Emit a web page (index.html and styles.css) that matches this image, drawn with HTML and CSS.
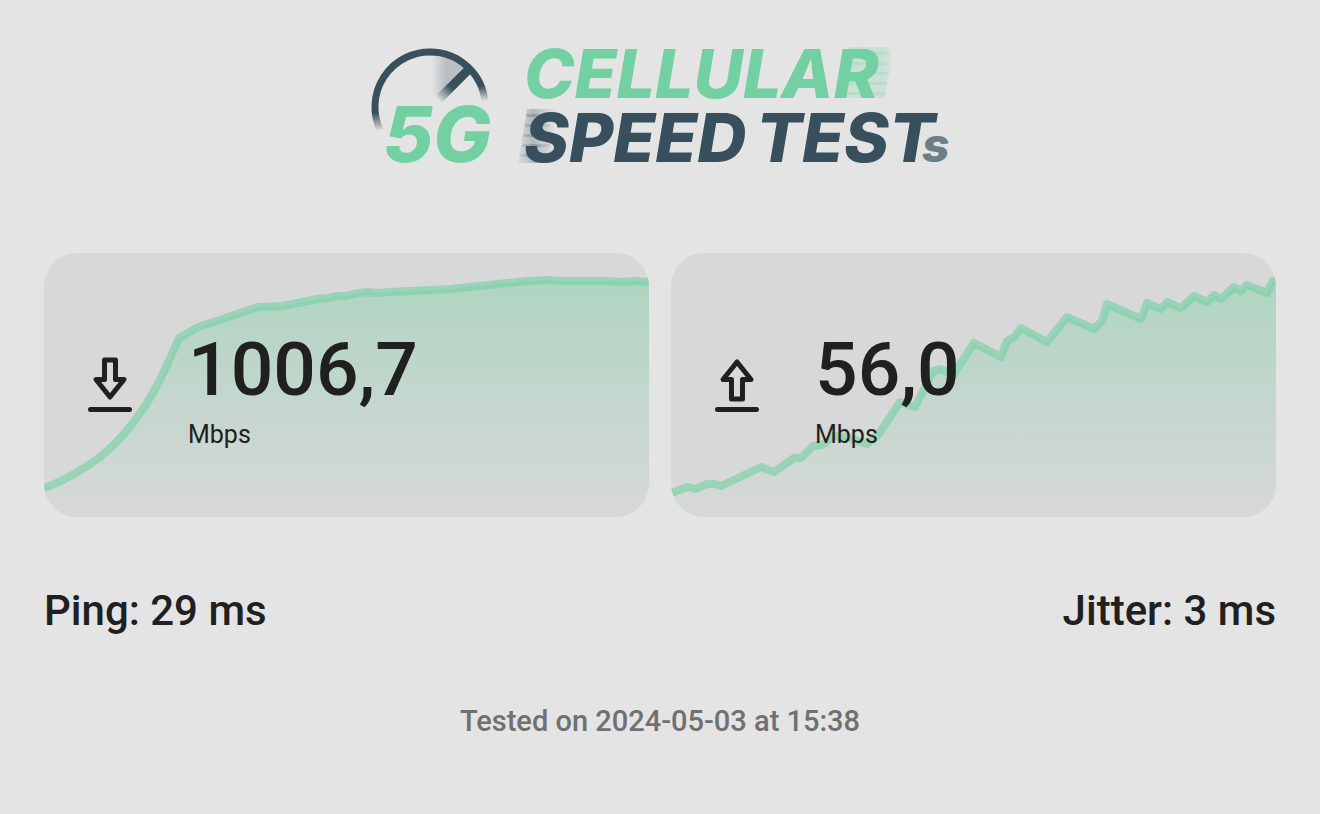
FILE: index.html
```html
<!DOCTYPE html>
<html lang="en">
<head>
    <meta charset="UTF-8">
    <meta name="viewport" content="width=device-width, initial-scale=1.0">
    <title>5G Cellular Speed Tests</title>
    <link rel="stylesheet" href="styles.css">
</head>
<body>
    <header class="header">
        <svg class="logo" viewBox="0 0 600 140" role="img" aria-label="5G Cellular Speed Tests">
            <defs>
                <linearGradient id="arcLeft" gradientUnits="userSpaceOnUse" x1="0" y1="78" x2="0" y2="96">
                    <stop offset="0" stop-color="#38505e"/>
                    <stop offset="1" stop-color="#38505e" stop-opacity="0"/>
                </linearGradient>
                <linearGradient id="arcRight" gradientUnits="userSpaceOnUse" x1="0" y1="51" x2="0" y2="66">
                    <stop offset="0" stop-color="#38505e"/>
                    <stop offset="1" stop-color="#38505e" stop-opacity="0"/>
                </linearGradient>
                <linearGradient id="needle" gradientUnits="userSpaceOnUse" x1="91" y1="52" x2="78" y2="65">
                    <stop offset="0" stop-color="#38505e"/>
                    <stop offset="1" stop-color="#38505e" stop-opacity="0"/>
                </linearGradient>
                <linearGradient id="sweep" gradientUnits="userSpaceOnUse" x1="71" y1="0" x2="86" y2="0">
                    <stop offset="0" stop-color="#38505e" stop-opacity="0"/>
                    <stop offset="1" stop-color="#38505e" stop-opacity="0.25"/>
                </linearGradient>
                <linearGradient id="trailGreen" gradientUnits="userSpaceOnUse" x1="505" y1="0" x2="534" y2="0">
                    <stop offset="0" stop-color="#72d0a2" stop-opacity="0.22"/>
                    <stop offset="0.7" stop-color="#72d0a2" stop-opacity="0.2"/>
                    <stop offset="1" stop-color="#72d0a2" stop-opacity="0.04"/>
                </linearGradient>
                <linearGradient id="trailBlue" gradientUnits="userSpaceOnUse" x1="158" y1="0" x2="196" y2="0">
                    <stop offset="0" stop-color="#38505e" stop-opacity="0.05"/>
                    <stop offset="0.4" stop-color="#38505e" stop-opacity="0.3"/>
                    <stop offset="1" stop-color="#38505e" stop-opacity="0"/>
                </linearGradient>
            </defs>
            <path fill="url(#sweep)" d="M70 20Q91 21 104 32L77 60L70 62Z"/>
            <path class="arc" stroke="url(#arcLeft)" d="M20 95A55 55 0 0 1 71 17"/>
            <path class="arc" stroke="url(#arcRight)" d="M70 17A55 55 0 0 1 125 68"/>
            <path class="needle" stroke="url(#needle)" d="M109 34L77 66"/>
            <path fill="url(#trailGreen)" d="M489 12H533L525 63H483Z"/>
            <path fill="url(#trailGreen)" d="M488 17H531V20H488ZM487 27H530V30H487ZM486 37H529V40H486ZM485 47H527V50H485ZM484 57H525V60H484Z"/>
            <path fill="url(#trailBlue)" d="M167 74H196L190 128H158Z"/>
            <path fill="url(#trailBlue)" d="M166 79H192V82H166ZM165 89H190V92H165ZM163 99H190V102H163ZM162 109H190V112H162ZM160 119H190V122H160Z"/>
            <text class="logo-badge" x="23" y="127">5G</text>
            <text class="logo-green" x="164" y="63">CELLULAR</text>
            <text class="logo-blue" x="164" y="127">SPEED</text>
            <text class="logo-blue" x="396" y="127">TEST</text>
            <text class="logo-small" x="562" y="127">s</text>
        </svg>
    </header>

    <main>
        <div class="results">
            <section class="card" aria-label="Download">
                <svg class="chart" viewBox="0 0 605 264" preserveAspectRatio="none" aria-hidden="true">
                    <defs>
                        <linearGradient id="fill" x1="0" y1="0" x2="0" y2="1">
                            <stop offset="0" stop-color="#72d0a2" stop-opacity="0.4"/>
                            <stop offset="1" stop-color="#72d0a2" stop-opacity="0"/>
                        </linearGradient>
                    </defs>
                    <path fill="url(#fill)" d="M0 235L3 234Q29 224 56 204Q96 172 123 112L135 85L154 74L176 67L193 61L214 54L239 53L263 48L273 46L284 45L293 43L303 43L313 40L324 39L333 40L346 39L406 36L483 28L504 27L518 28L563 28L578 29L591 28L605 29V264H0Z"/>
                    <path class="line" d="M0 235L3 234Q29 224 56 204Q96 172 123 112L135 85L154 74L176 67L193 61L214 54L239 53L263 48L273 46L284 45L293 43L303 43L313 40L324 39L333 40L346 39L406 36L483 28L504 27L518 28L563 28L578 29L591 28L605 29"/>
                </svg>
                <svg class="icon" viewBox="0 0 44 56" aria-hidden="true">
                    <path d="M16.500 3H27.500V22.500H36L22 40L8 22.500H16.500ZM2.500 52.500H41.500"/>
                </svg>
                <div class="reading">
                    <div class="value">1006,7</div>
                    <div class="unit">Mbps</div>
                </div>
            </section>

            <section class="card" aria-label="Upload">
                <svg class="chart" viewBox="0 0 605 264" preserveAspectRatio="none" aria-hidden="true">
                    <path fill="url(#fill)" d="M0 239L3 239L17 234L24 236L36 231L44 231L50 233L69 224L90 214L103 219L123 205L130 205L142 193L151 192L163 183L176 184L196 191L207 182L229 149L244 154L262 118L270 116L282 122L303 90L330 104L336 88L343 84L350 75L376 89L396 64L423 76L431 68L436 51L470 66L476 50L490 56L496 49L510 55L523 43L536 49L543 42L550 46L563 34L570 38L576 32L596 40L602 28L605 28V264H0Z"/>
                    <path class="line" d="M0 239L3 239L17 234L24 236L36 231L44 231L50 233L69 224L90 214L103 219L123 205L130 205L142 193L151 192L163 183L176 184L196 191L207 182L229 149L244 154L262 118L270 116L282 122L303 90L330 104L336 88L343 84L350 75L376 89L396 64L423 76L431 68L436 51L470 66L476 50L490 56L496 49L510 55L523 43L536 49L543 42L550 46L563 34L570 38L576 32L596 40L602 28"/>
                </svg>
                <svg class="icon" viewBox="0 0 44 56" aria-hidden="true">
                    <path d="M16.500 42H27.500V22.500H36L22 5L8 22.500H16.500ZM2.500 52.500H41.500"/>
                </svg>
                <div class="reading">
                    <div class="value">56,0</div>
                    <div class="unit">Mbps</div>
                </div>
            </section>
        </div>

        <div class="latency">
            <span>Ping: 29 ms</span>
            <span>Jitter: 3 ms</span>
        </div>
    </main>

    <footer class="tested">Tested on 2024-05-03 at 15:38</footer>
</body>
</html>
```
FILE: styles.css
```css
body {
    margin: 0;
    padding: 35px 44px;
    background-color: #e4e4e4;
    color: #202020;
    font-family: Roboto, sans-serif;
    font-weight: 500;
}
.header {
    display: flex;
    justify-content: center;
    margin-bottom: 78px;
}
.logo {
    width: 600px;
    max-width: 100%;
    overflow: visible;
}
.logo text {
    font-family: Inter, sans-serif;
    font-weight: 800;
    font-style: italic;
    font-size: 68px;
}
.logo .logo-badge {
    font-size: 77px;
    fill: #72d0a2;
}
.logo-green {
    fill: #72d0a2;
}
.logo-blue {
    fill: #38505e;
}
.logo .logo-small {
    font-size: 48px;
    fill: #6b7f89;
}
.arc {
    fill: none;
    stroke-width: 7;
}
.needle {
    stroke-width: 9;
}
.results {
    display: grid;
    grid-template-columns: 1fr 1fr;
    gap: 22px;
}
.card {
    position: relative;
    display: flex;
    align-items: center;
    gap: 56px;
    padding: 66px 44px;
    border-radius: 33px;
    background-color: #d8d8d8;
    overflow: hidden;
}
.chart {
    position: absolute;
    top: 0;
    left: 0;
    width: 100%;
    height: 100%;
}
.line {
    fill: none;
    stroke: #72d0a2;
    stroke-opacity: 0.6;
    stroke-width: 8;
    stroke-linejoin: round;
    stroke-linecap: round;
}
.icon {
    position: relative;
    width: 44px;
    height: 56px;
    fill: none;
    stroke: #202020;
    stroke-width: 5;
    stroke-linejoin: round;
    stroke-linecap: round;
}
.reading {
    position: relative;
}
.value {
    font-size: 75px;
    line-height: 100px;
}
.unit {
    font-size: 25px;
    font-weight: 400;
    line-height: 32px;
}
.latency {
    display: flex;
    justify-content: space-between;
    margin-top: 66px;
    font-size: 42px;
    line-height: 56px;
}
.tested {
    margin-top: 62px;
    color: #707070;
    font-size: 29px;
    line-height: 40px;
    text-align: center;
}
```
